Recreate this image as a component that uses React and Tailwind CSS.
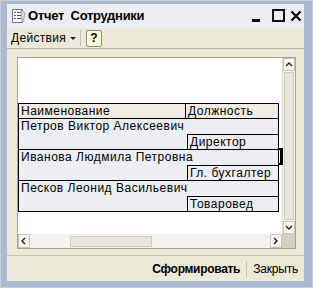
import React from 'react';

const rows = [
  { name: 'Петров Виктор Алексеевич', job: 'Директор' },
  { name: 'Иванова Людмила Петровна', job: 'Гл. бухгалтер' },
  { name: 'Песков Леонид Васильевич', job: 'Товаровед' },
];

const font = { fontFamily: '"Liberation Sans", Arial, sans-serif' };

const ReportIcon = () => (
  <svg width="16" height="16" viewBox="0 0 16 16">
    <rect x="2.5" y="1.5" width="10" height="13" fill="#fff" stroke="#6b7a90" />
    <rect x="4" y="4" width="2" height="1" fill="#4a5a78" />
    <rect x="7" y="4" width="4" height="1" fill="#4a5a78" />
    <rect x="4" y="7" width="2" height="1" fill="#4a5a78" />
    <rect x="7" y="7" width="4" height="1" fill="#4a5a78" />
    <rect x="4" y="10" width="2" height="1" fill="#4a5a78" />
    <rect x="7" y="10" width="4" height="1" fill="#4a5a78" />
    <path d="M11 2 L15 5 L13 14 L12 14 Z" fill="#d8dde6" stroke="#8a96aa" strokeWidth="0.8" />
  </svg>
);

const Arrow = ({ dir }) => {
  const d = {
    up: 'M2 6 L5 3 L8 6',
    down: 'M2 3 L5 6 L8 3',
    left: 'M6 2 L3 5 L6 8',
    right: 'M3 2 L6 5 L3 8',
  }[dir];
  return (
    <svg width="10" height="10" viewBox="0 0 10 10">
      <path d={d} fill="none" stroke="#222" strokeWidth="1.4" />
    </svg>
  );
};

export default function App() {
  return (
    <div
      className="w-[313px] h-[288px] bg-[#a9b9d2] pt-[3px] pl-[6px] pr-[8px] pb-[6px] border border-[#c9ced6] text-black"
      style={font}
    >
      <div className="flex flex-col h-full bg-[#ece9d8]">
        {/* title bar */}
        <div className="h-[24px] flex items-center bg-[#eceef3] pl-[3px] pr-[2px]">
          <ReportIcon />
          <span className="ml-[2px] text-[13px] font-bold tracking-[-0.3px]">Отчет&nbsp; Сотрудники</span>
          <div className="ml-auto flex items-center">
            <svg width="12" height="14" viewBox="0 0 12 14">
              <rect x="1" y="10" width="8" height="3" fill="#111" />
            </svg>
            <svg width="13" height="13" viewBox="0 0 13 13" className="ml-[9px]">
              <rect x="1" y="1" width="11" height="11" fill="none" stroke="#111" strokeWidth="2" />
            </svg>
            <svg width="12" height="12" viewBox="0 0 12 12" className="ml-[5px]">
              <path d="M1.5 1.5 L10.5 10.5 M10.5 1.5 L1.5 10.5" stroke="#111" strokeWidth="2.4" />
            </svg>
          </div>
        </div>
        {/* toolbar */}
        <div className="h-[22px] flex items-center bg-[#ece9d8] border-b border-[#b9b6a8] pl-[4px]">
          <span className="text-[12px] tracking-[0.3px]">Действия</span>
          <svg width="8" height="10" viewBox="0 0 8 10" className="ml-[3px]">
            <path d="M1 4 L7 4 L4 7 Z" fill="#222" />
          </svg>
          <div className="ml-[3px] w-px h-[16px] bg-[#c6c2b0]" />
          <div className="ml-[5px] w-[16px] h-[17px] rounded-[2px] border border-[#8f8b78] bg-[#fdfbd8] flex items-center justify-center text-[12px] font-bold">
            ?
          </div>
        </div>
        {/* body */}
        <div className="flex-1 pt-[8px] pl-[10px] pr-[8px] pb-[6px]">
          <div className="h-[192px] border border-[#a8a597] bg-white flex flex-col">
            <div className="flex flex-1 min-h-0">
              <div className="flex-1 relative">
                <div className="pt-[45px] text-[12px] leading-[14px] tracking-[0.5px]">
                  <div className="relative w-[261px] border border-black">
                    <div className="flex bg-[#f1ece1] h-[15px] border-b border-black">
                      <div className="w-[167px] border-r border-black pl-[2px]">Наименование</div>
                      <div className="flex-1 pl-[2px]">Должность</div>
                    </div>
                    {rows.map((r, i) => (
                      <div key={r.name} className={`bg-[#eceef2] ${i > 0 ? 'border-t border-black' : ''}`}>
                        <div className="h-[15px] pl-[2px]">{r.name}</div>
                        <div className="flex h-[15px]">
                          <div className="w-[168px]" />
                          <div className="flex-1 border-l border-t border-black pl-[2px]">{r.job}</div>
                        </div>
                      </div>
                    ))}
                    {/* current row marker */}
                    <div className="absolute right-[-5px] top-[44px] w-[5px] h-[17px] border-t-2 border-b-2 border-r-[3px] border-black" />
                  </div>
                </div>
              </div>
              {/* vertical scrollbar */}
              <div className="w-[13px] bg-[#f3f2ec] flex flex-col border-l border-[#e0ded4]">
                <div className="h-[13px] border border-[#c7c5b8] bg-[#f7f6f1] flex items-center justify-center">
                  <Arrow dir="up" />
                </div>
                <div className="flex-1 mx-[1px] my-[1px] border border-[#cfcdc0] bg-[#e9e7dd]" />
                <div className="h-[13px] border border-[#c7c5b8] bg-[#f7f6f1] flex items-center justify-center">
                  <Arrow dir="down" />
                </div>
              </div>
            </div>
            {/* horizontal scrollbar */}
            <div className="h-[14px] flex bg-[#f3f2ec]">
              <div className="w-[12px] border border-[#c7c5b8] bg-[#f7f6f1] flex items-center justify-center">
                <Arrow dir="left" />
              </div>
              <div className="flex-1 flex items-center pl-[40px]">
                <div className="w-[82px] h-[11px] border border-[#cfcdc0] bg-[#e9e7dd]" />
              </div>
              <div className="w-[12px] border border-[#c7c5b8] bg-[#f7f6f1] flex items-center justify-center">
                <Arrow dir="right" />
              </div>
              <div className="w-[13px] bg-[#d4d0c4]" />
            </div>
          </div>
        </div>
        {/* bottom bar */}
        <div className="h-[26px] border-t border-[#c8c5b6] flex items-center justify-end pr-[6px] text-[12px]">
          <span className="font-bold tracking-[-0.3px]">Сформировать</span>
          <div className="mx-[6px] w-px h-[16px] bg-[#c6c2b0]" />
          <span className="tracking-[-0.2px]">Закрыть</span>
        </div>
      </div>
    </div>
  );
}
